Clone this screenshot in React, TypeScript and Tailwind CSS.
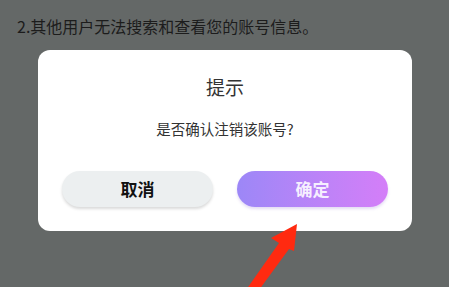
import React from 'react';

const font = { fontFamily: '"Noto Sans CJK SC", "Noto Sans", sans-serif' };

export default function App() {
  return (
    <main className="relative h-[287px] w-full overflow-hidden bg-[#646867]" style={font}>
      <p className="pl-[17px] pt-[15px] text-[16px] leading-[22px] text-[#1c1c1c]">
        2.其他用户无法搜索和查看您的账号信息。
      </p>

      <section className="mx-[38px] mt-[13px] flex h-[181px] w-[374px] flex-col items-center rounded-[12px] bg-white">
        <h2 className="mt-[24px] text-[19px] leading-[26px] text-[#333333]">提示</h2>
        <p className="mt-[19px] text-[14.5px] leading-[20px] text-[#333333]">是否确认注销该账号?</p>
        <div className="mt-[32px] flex w-full justify-center gap-[24px]">
          <button className="h-[36px] w-[151px] rounded-full bg-[#eceff0] text-[17px] font-bold text-[#111111] shadow-[0_2px_3px_rgba(0,0,0,0.15)]">
            取消
          </button>
          <button className="h-[36px] w-[151px] rounded-full bg-gradient-to-r from-[#9c87f7] to-[#d47ef8] text-[17px] font-bold text-[#f6efff] shadow-[0_2px_3px_rgba(120,80,200,0.2)]">
            确定
          </button>
        </div>
      </section>

      {/* red arrow pointing at the confirm button */}
      <svg className="absolute left-0 top-0" width="449" height="287" viewBox="0 0 449 287">
        <polygon
          points="297,224 271,238 279,243 246,290 259,290 289,249 294,251"
          fill="#ff2a10"
        />
      </svg>
    </main>
  );
}
